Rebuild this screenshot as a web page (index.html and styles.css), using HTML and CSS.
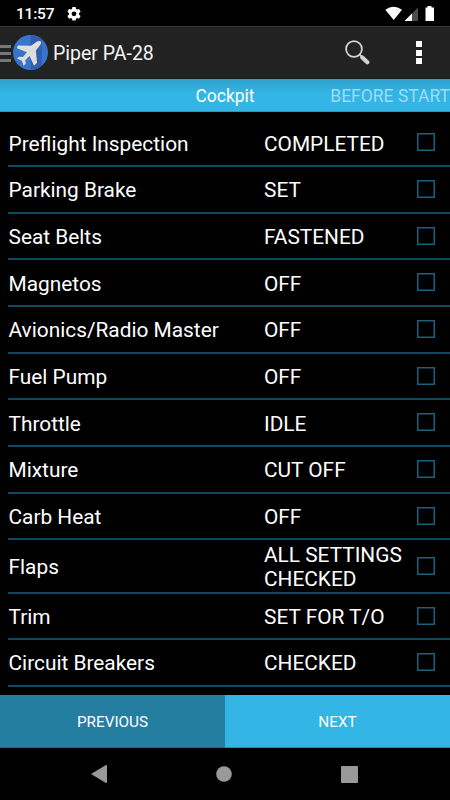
FILE: index.html
```html
<!DOCTYPE html>
<html lang="en">
<head>
  <meta charset="UTF-8">
  <meta name="viewport" content="width=device-width, initial-scale=1.0">
  <link rel="stylesheet" href="styles.css">
  <title>Piper PA-28</title>
</head>
<body>
  <div class="status-bar">
    <span class="time">11:57</span>
    <svg class="gear" width="14" height="14" viewBox="0 0 14 14">
      <path fill="#fff" fill-rule="evenodd" d="M5.4 0h3.2l.4 1.9 1.1.7 1.9-.7 1.6 2.6-1.5 1.4v1.8l1.5 1.4-1.6 2.6-1.9-.7-1.1.7-.4 1.9H5.4l-.4-1.9-1.1-.7-1.9.7L.4 9.1l1.500-1.4V5.9L.4 4.5 2 1.9l1.9.7L5 1.900zM7 4.4a2.4 2.4 0 1 0 0 4.8 2.4 2.4 0 0 0 0-4.8z"/>
    </svg>
    <svg class="signals" width="50" height="16" viewBox="0 0 50 16">
      <path fill="#fff" d="M.3 3.8Q8.500-2.500 17 3.8L8.700 14z"/>
      <path fill="#4d4d4d" d="M33 1.5V15H19.500z"/>
      <path fill="#fff" d="M27 7.5V15h-7.500z"/>
      <path fill="#fff" d="M42.500 0h4v1.5H49V15h-8.500V1.500h2z"/>
    </svg>
  </div>

  <header class="action-bar">
    <div class="drawer"><i></i><i></i><i></i></div>
    <svg class="logo" width="35" height="35" viewBox="0 0 35 35">
      <clipPath id="disc"><circle cx="17.5" cy="17.5" r="17.5"/></clipPath>
      <g clip-path="url(#disc)">
        <path fill="#3974cc" d="M0 0h35v35H0z"/>
        <path fill="#2f60ad" d="M17.500 0H29v35H17.500z"/>
      </g>
      <path fill="#dedede" d="M27.700 6.600c.9.800.3 2.300-.5 3.300l-4.300 5.500 1.100 12.400-3 3-4.400-9.900-4.400 4.300.6 3.300-2.200 2.300-1.700-5-4.900-2.200 2.100-1.800 3.800.2 4-4.700L4 13.200l.8-2.600 13.300.2 5.200-3.800c1.200-.9 3.500-1.300 4.400-.4z"/>
    </svg>
    <h1>Piper PA-28</h1>
    <svg class="search" width="25" height="25" viewBox="0 0 25 25">
      <circle cx="9" cy="9" r="7.9" fill="none" stroke="#d0d0d0" stroke-width="1.8"/>
      <path d="M14.500 14.500l2.500 2.500" stroke="#d0d0d0" stroke-width="2"/>
      <path d="M17.300 17.500l5 4.800" stroke="#d0d0d0" stroke-width="4.2" stroke-linecap="round"/>
    </svg>
    <div class="overflow"><i></i><i></i><i></i></div>
  </header>

  <nav class="tabs">
    <span></span>
    <span class="current">Cockpit</span>
    <span class="next-tab">BEFORE START</span>
  </nav>

  <ul class="checklist">
    <li><span class="item">Preflight Inspection</span><span class="action">COMPLETED</span><i class="box"></i></li>
    <li><span class="item">Parking Brake</span><span class="action">SET</span><i class="box"></i></li>
    <li><span class="item">Seat Belts</span><span class="action">FASTENED</span><i class="box"></i></li>
    <li><span class="item">Magnetos</span><span class="action">OFF</span><i class="box"></i></li>
    <li><span class="item">Avionics/Radio Master</span><span class="action">OFF</span><i class="box"></i></li>
    <li><span class="item">Fuel Pump</span><span class="action">OFF</span><i class="box"></i></li>
    <li><span class="item">Throttle</span><span class="action">IDLE</span><i class="box"></i></li>
    <li><span class="item">Mixture</span><span class="action">CUT OFF</span><i class="box"></i></li>
    <li><span class="item">Carb Heat</span><span class="action">OFF</span><i class="box"></i></li>
    <li class="tall"><span class="item">Flaps</span><span class="action">ALL SETTINGS CHECKED</span><i class="box"></i></li>
    <li><span class="item">Trim</span><span class="action">SET FOR T/O</span><i class="box"></i></li>
    <li><span class="item">Circuit Breakers</span><span class="action">CHECKED</span><i class="box"></i></li>
  </ul>

  <div class="buttons">
    <button class="previous">PREVIOUS</button>
    <button class="next">NEXT</button>
  </div>

  <div class="nav-bar">
    <svg width="16" height="18" viewBox="0 0 16 18"><path fill="#999" d="M0 9L14.500.3Q16-.3 16 1v16q0 1.300-1.500.7z"/></svg>
    <svg width="16" height="16" viewBox="0 0 16 16"><circle cx="8" cy="8" r="7.8" fill="#999"/></svg>
    <svg width="17" height="17" viewBox="0 0 17 17"><rect width="17" height="17" rx="1" fill="#999"/></svg>
  </div>
</body>
</html>
```
FILE: styles.css
```css
* {
  box-sizing: border-box;
}

body {
  margin: 0;
  height: 800px;
  display: flex;
  flex-direction: column;
  overflow: hidden;
  background-color: #000;
  color: #fff;
  font-family: Roboto, sans-serif;
}

svg {
  display: block;
  flex-shrink: 0;
}

.status-bar {
  height: 26px;
  display: flex;
  align-items: center;
  padding: 1px 15px 0 16px;
  font-size: 15.5px;
  font-weight: 500;
}

.time {
  width: 38px;
  letter-spacing: -.2px;
}

.gear {
  margin-left: 13px;
}

.signals {
  margin-left: auto;
}

.action-bar {
  height: 53px;
  display: flex;
  align-items: center;
  padding-right: 28px;
  background-color: #222;
  border-top: 1px solid #383838;
  border-bottom: 1px solid #181818;
}

.drawer {
  width: 11px;
  display: flex;
  flex-direction: column;
  gap: 4px;
  padding-top: 1px;
}

.drawer i {
  height: 3px;
  background-color: #777;
}

.logo {
  margin-left: 2px;
}

h1 {
  margin: 0 auto 0 5px;
  padding-top: 2px;
  font-size: 19.5px;
  font-weight: 400;
  color: #f3f3f3;
}

.search {
  margin-right: 46px;
}

.overflow {
  display: flex;
  flex-direction: column;
  gap: 2.5px;
}

.overflow i {
  width: 6px;
  height: 6px;
  background-color: #fff;
}

.tabs {
  height: 33px;
  display: grid;
  grid-template-columns: 1fr auto 1fr;
  align-items: center;
  padding-top: 2px;
  background: linear-gradient(#2f9fcb, #33b5e5 14px);
  border-bottom: 1px solid #2a96be;
  font-size: 17.5px;
}

.next-tab {
  justify-self: end;
  color: #9fdcf4;
  white-space: nowrap;
}

.checklist {
  flex: 1;
  margin: 0;
  padding: 8.4px 0 0 8px;
  list-style: none;
  font-size: 20.85px;
  line-height: 24.3px;
}

.checklist li {
  height: 46.67px;
  display: flex;
  align-items: center;
  padding-right: 15px;
  border-bottom: 2px solid #104860;
}

.checklist .tall {
  height: 53.3px;
}

.item,
.action {
  padding-top: 2px;
}

.item {
  width: 256px;
  padding-left: .5px;
}

.action {
  width: 145px;
}

.box {
  width: 18px;
  height: 18px;
  margin: 0 0 .8px auto;
  border: 1px solid #17627f;
  box-shadow: inset 0 0 0 .5px #17627f;
}

.buttons {
  height: 53px;
  display: grid;
  grid-template-columns: 1fr 1fr;
}

button {
  border: none;
  border-bottom: 1px solid #1c6986;
  padding: 2px 0 0;
  color: #fff;
  font-family: inherit;
  font-size: 15.3px;
}

.previous {
  background-color: #247ea0;
}

.next {
  background-color: #33b5e5;
  border-bottom-color: #278db3;
}

.nav-bar {
  height: 52px;
  display: flex;
  align-items: center;
  justify-content: space-between;
  padding: 0 92px 0 91px;
}
```
